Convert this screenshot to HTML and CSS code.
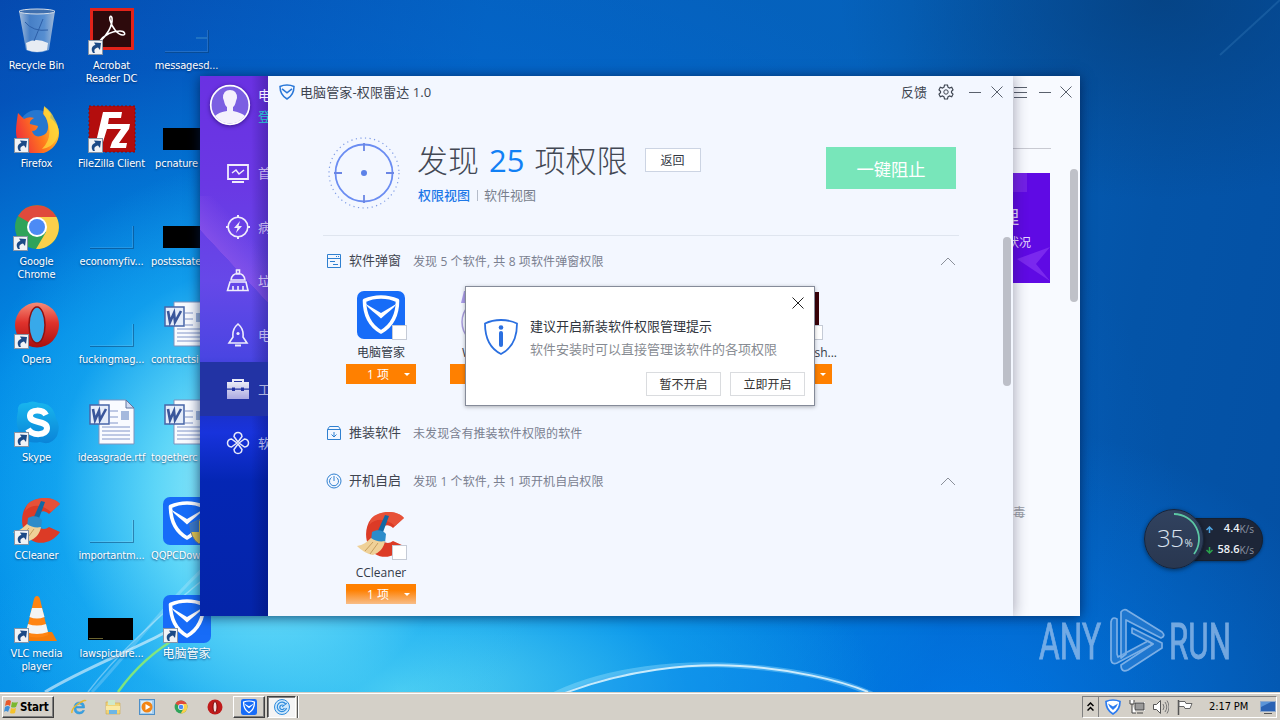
FILE: index.html
```html
<!DOCTYPE html>
<html lang="zh-CN">
<head>
<meta charset="utf-8">
<title>Desktop</title>
<link rel="stylesheet" href="styles.css">
</head>
<body>
<svg class="defs" width="0" height="0">
  <defs>
    <linearGradient id="gFox" x1="0" y1="0.6" x2="1" y2="0.2"><stop offset="0" stop-color="#f0303a"/><stop offset="0.5" stop-color="#ff7a1c"/><stop offset="1" stop-color="#ffdc3a"/></linearGradient>
    <linearGradient id="gOpera" x1="0" y1="0" x2="0" y2="1"><stop offset="0" stop-color="#f58c78"/><stop offset="0.45" stop-color="#e0322c"/><stop offset="1" stop-color="#a80f0f"/></linearGradient>
    <linearGradient id="gSkype" x1="0" y1="0" x2="0" y2="1"><stop offset="0" stop-color="#18b6ee"/><stop offset="1" stop-color="#0a84d8"/></linearGradient>
    <linearGradient id="gBin" x1="0" y1="0" x2="1" y2="0"><stop offset="0" stop-color="#b9cbe0"/><stop offset="0.3" stop-color="#4d84c8"/><stop offset="0.7" stop-color="#5f95d4"/><stop offset="1" stop-color="#b4c6dc"/></linearGradient>
    <linearGradient id="gTool" x1="0" y1="0" x2="0" y2="1"><stop offset="0" stop-color="#ffffff"/><stop offset="1" stop-color="#b9b6ea"/></linearGradient>
    <symbol id="shield" viewBox="0 0 48 48"><rect width="48" height="48" rx="7" fill="#176cf8"/><path d="M24 6c6 0 11 1 16.500 3.500C40.500 23 36 34 24 41 12 34 7.500 23 7.500 9.500 13 7 18 6 24 6z" fill="none" stroke="#fff" stroke-width="3.600" stroke-linejoin="round"/><path d="M8 12.500L24 22l16-9.500C36 18 30 22 24 27.500 18 22 12 18 8 12.500z" fill="#fff"/></symbol>
    <symbol id="shortcut" viewBox="0 0 15 15"><rect x=".5" y=".5" width="14" height="14" fill="#f1f3f6" stroke="#8794a5"/><path d="M5 13C2.500 9 4 5.500 7.500 5L6 2.500l7 .5-1 7-2-2.500C7 8 5.500 10 7 13z" fill="#1c4a86"/></symbol>
    <symbol id="cc" viewBox="0 0 48 48"><path d="M47 7C40-1 22-1 14 8 6 18 8 36 18 43c10 6 22 2 29-8l-11-5c-5 4-11 2-12-6-1-9 6-13 12-7z" fill="#dc3b26"/><path d="M47 7C40-1 22-1 14 8l-2 6C20 6 30 8 38 15z" fill="#ee6045" opacity=".6"/><path d="M28 4l4 1-7 19-5-2z" fill="#1268a4"/><path d="M15 21c5-3 11-2 14 2l-1 9-14-2z" fill="#2d8cca"/><path d="M14 27c4 3 9 4 14 3-1 7-6 12-12 14C10 43 4 39 0 35c6-1 10-4 14-8z" fill="#efd198"/><path d="M16 31l-8 9M21 32l-8 11" stroke="#c79f5e" fill="none"/></symbol>
    <symbol id="word" viewBox="0 0 48 48"><path d="M11 1h27l8 8v36H11z" fill="#f9fbff" stroke="#7f93bd"/><path d="M38 1v8h8z" fill="#cfdbf2" stroke="#61759d"/><path d="M22 12h8M22 18h8M22 24h8M14 28h28M14 32h28M14 36h28M14 40h28" stroke="#8296c9"/><rect x="33" y="12" width="8" height="9" fill="#a5b9dd"/><rect x="2" y="6" width="19" height="19" fill="#e6edfa" stroke="#4765a8" stroke-width="1.500"/><path d="M5 10l2 11 4-9 1 9 6-11" fill="none" stroke="#3a569b" stroke-width="2.600"/></symbol>
    <symbol id="thumb" viewBox="0 0 48 48"><path d="M2 45.500H45.500V23" fill="none" stroke="#0b3d6e" stroke-opacity=".5"/><path d="M2 44.500H44.500V23" fill="none" stroke="#fff" stroke-opacity=".12"/></symbol>
    <symbol id="chrome" viewBox="0 0 48 48"><circle cx="24" cy="24" r="22" fill="#2fa35a"/><path d="M24 24L5 13A22 22 0 0 1 43.500 14H24z" fill="#e04a3c"/><path d="M24 14h19.500A22 22 0 0 1 23 46l10-17z" fill="#fbd04b"/><circle cx="24" cy="24" r="10" fill="#fff"/><circle cx="24" cy="24" r="8" fill="#4c8bf5"/></symbol>
    <symbol id="opera" viewBox="0 0 48 48"><ellipse cx="24" cy="24" rx="22" ry="22.500" fill="url(#gOpera)"/><ellipse cx="24" cy="24" rx="8" ry="18" fill="#38a9ea" stroke="#8e1212" stroke-width="1.500"/></symbol>
    <symbol id="chev" viewBox="0 0 16 9"><path d="M1 8l7-7 7 7" fill="none" stroke="#8b909a"/></symbol>
    <symbol id="x" viewBox="0 0 12 12"><path d="M.5.500l11 11M11.500.500l-11 11" stroke="#5a616d" fill="none"/></symbol>
  </defs>
</svg>

<div class="desktop">
  <svg class="streaks" viewBox="0 0 1280 692">
    <path d="M45 692C95 662 150 645 200 612S330 540 380 520" fill="none" stroke="#fff" stroke-opacity=".55" stroke-width="3"/>
    <path d="M88 692C120 650 165 610 215 570" fill="none" stroke="#fff" stroke-opacity=".35" stroke-width="1.500"/>
    <path d="M92 692C140 640 175 590 230 545" fill="none" stroke="#fff" stroke-opacity=".2" stroke-width="3"/>
    <path d="M118 692C135 668 155 650 180 636" fill="none" stroke="#90ee6a" stroke-width="2.500" stroke-opacity=".85"/>
    <path d="M560 694C640 655 780 650 876 694z" fill="#1590f0" fill-opacity=".3"/>
    <path d="M555 694C610 668 680 662 740 666S840 680 872 694" fill="none" stroke="#a8e8ff" stroke-opacity=".35" stroke-width="5"/>
    <path d="M565 693C625 670 690 663 740 666S840 680 868 692" fill="none" stroke="#f0fcff" stroke-opacity=".8" stroke-width="2"/>
    <path d="M1280 0L1220 55" stroke="#5ba5dc" stroke-opacity=".2" stroke-width="2"/>
  </svg>

  <div class="icons">
    <div class="icon"><svg class="pic" viewBox="0 0 48 48"><path d="M6 4h36l-6 39q-12 5-23 0z" fill="url(#gBin)" opacity=".9"/><path d="M13 36q10-6 22 0l-1 7q-10 4-20 0z" fill="#e7ecf3"/><ellipse cx="24" cy="4.500" rx="18" ry="2.500" fill="#3f6fae" stroke="#d6dfea"/><path d="M12 15q8 10 23 8M30 12l-9 22" stroke="#2d5fa8" fill="none"/></svg><span>Recycle Bin</span></div>
    <div class="icon"><svg class="pic" viewBox="0 0 48 48"><rect x="2" y="1" width="44" height="42" fill="#e2231a"/><rect x="5" y="4" width="38" height="36" fill="#2d0a0c"/><path d="M11 35c8-6 14-17 13-24-1-3-3-2-2 2 2 8 8 15 13 15 3 0 2-4-3-4-8 0-16 4-21 11z" fill="none" stroke="#fff" stroke-width="1.600"/><use href="#shortcut" x="0" y="33" width="15" height="15"/></svg><span>Acrobat<br>Reader DC</span></div>
    <div class="icon"><svg class="pic"><use href="#thumb"/><path d="M33 31h11" stroke="#3d8cc8"/></svg><span>messagesd...</span></div>

    <div class="icon"><svg class="pic" viewBox="0 0 48 48"><circle cx="24" cy="23" r="18" fill="#2577d0"/><path d="M5 8l6 6q5-3 10-1-5 3-4 6l8 2q-1 5-6 5 2 7 9 5 8-2 7-11-1-8-5-11l1-7q4 3 7 7-1 4-1 4 9 6 9 15c0 12-10 21-22 21S3 39 3 27C3 20 5 8 5 8z" fill="url(#gFox)"/><path d="M31 1q7 5 10 12 8 13 2 22-5 8-14 9 9-9 7-21-1-8-5-13z" fill="#ffd93b" opacity=".75"/><use href="#shortcut" x="1" y="33" width="15" height="15"/></svg><span>Firefox</span></div>
    <div class="icon"><svg class="pic" viewBox="0 0 48 48"><rect x="1" y="1" width="46" height="46" fill="#b30d0d" stroke="#8a0b0b" stroke-dasharray="2 2"/><path d="M15 7h19l-1 6H21l-1 6h8l-1 5h-8l-4 13H8z" fill="#fff"/><path d="M27 19h15l-1 5-10 14h8l-1 5H22l2-6 9-13h-7z" fill="#fff"/><use href="#shortcut" x="0" y="33" width="15" height="15"/></svg><span>FileZilla Client</span></div>
    <div class="icon"><svg class="pic"><rect y="23" width="48" height="22"/></svg><span class="left">pcnature</span></div>

    <div class="icon"><svg class="pic" viewBox="0 0 48 48"><use href="#chrome"/><use href="#shortcut" x="0" y="33" width="15" height="15"/></svg><span>Google<br>Chrome</span></div>
    <div class="icon"><svg class="pic"><use href="#thumb"/></svg><span>economyfiv...</span></div>
    <div class="icon"><svg class="pic"><rect y="23" width="48" height="22"/></svg><span class="left2">postsstate</span></div>

    <div class="icon"><svg class="pic" viewBox="0 0 48 48"><use href="#opera"/><use href="#shortcut" x="1" y="33" width="15" height="15"/></svg><span>Opera</span></div>
    <div class="icon"><svg class="pic"><use href="#thumb"/></svg><span>fuckingmag...</span></div>
    <div class="icon"><svg class="pic"><use href="#word"/></svg><span class="left2">contractsi</span></div>

    <div class="icon"><svg class="pic" viewBox="0 0 48 48"><path d="M5 12Q4 3 14 4q5-3 12 0 14 0 17 15 5 8 1 18-6 10-17 6Q10 46 6 32 2 25 5 12z" fill="url(#gSkype)"/><path d="M33 16c-3-6-16-6-16 1 0 8 17 4 17 12 0 8-15 8-19 1" fill="none" stroke="#fff" stroke-width="6"/><use href="#shortcut" x="1" y="33" width="15" height="15"/></svg><span>Skype</span></div>
    <div class="icon"><svg class="pic"><use href="#word"/></svg><span>ideasgrade.rtf</span></div>
    <div class="icon"><svg class="pic"><use href="#word"/></svg><span class="left2">togetherc</span></div>

    <div class="icon"><svg class="pic" viewBox="0 0 48 48"><use href="#cc"/><use href="#shortcut" x="1" y="33" width="15" height="15"/></svg><span>CCleaner</span></div>
    <div class="icon"><svg class="pic"><use href="#thumb"/></svg><span>importantm...</span></div>
    <div class="icon"><svg class="pic"><use href="#shield"/><path d="M27 27l9-4 9 4q0 14-9 20-9-6-9-20z" fill="#e8c84a" stroke="#6a7a90"/><path d="M36 23v12h-9v-8z" fill="#3a78c8"/></svg><span class="left2">QQPCDow</span></div>

    <div class="icon"><svg class="pic" viewBox="0 0 48 48"><path d="M9 37h30l5 9H5z" fill="#f57c0a"/><path d="M24 1q2.500 0 3.500 5l8 34q-12 5-23 0l8-34q1-5 3.500-5z" fill="#ff8411"/><path d="M19 13h10l2.500 9q-7.500 3-15 0zM15 29q9 3 18 0l2 8q-11 4-22 0z" fill="#f4f4f2"/><use href="#shortcut" x="1" y="33" width="15" height="15"/></svg><span>VLC media player</span></div>
    <div class="icon"><svg class="pic"><rect y="23" width="45" height="22"/><path d="M1 43.500h14" stroke="#6b6430"/></svg><span>lawspicture...</span></div>
    <div class="icon"><svg class="pic" viewBox="0 0 48 48"><use href="#shield"/><use href="#shortcut" x="0" y="33" width="15" height="15"/></svg><span class="cjk">电脑管家</span></div>
  </div>

  <div class="backwin">
    <aside class="side">
      <div class="user">
        <svg class="avatar" viewBox="0 0 42 42"><circle cx="21" cy="21" r="19.300" fill="#7b5fe2" stroke="#fff" stroke-width="1.700"/><path d="M14 14q0-8 7-8t7 8l-1 3q-1 5-3 6v4q9 2 12 5-6 7.500-15 7.500T6 32q4-4 12-5v-4q-2-1-3-6z" fill="#f4f1fd"/></svg>
        <div class="who"><span>电</span><span class="login">登</span></div>
      </div>
      <nav>
        <div class="nav"><svg viewBox="0 0 24 24"><path d="M2 4h20v14H2z" fill="none" stroke="#fff" stroke-width="1.800"/><path d="M6 12l4-3 3 4 5-4" fill="none" stroke="#fff" stroke-width="1.500"/><path d="M6 21h12" stroke="#fff" stroke-width="2"/></svg><span>首</span></div>
        <div class="nav"><svg viewBox="0 0 24 24"><circle cx="12" cy="12" r="9.800" fill="none" stroke="#fff" stroke-width="1.600"/><path d="M12 0v3M12 21v3M0 12h3M21 12h3" stroke="#fff" stroke-width="2"/><path d="M14 6l-6 7h3.500L10 18l6-7h-3.500z" fill="#fff"/></svg><span>病</span></div>
        <div class="nav"><svg viewBox="0 0 24 24"><path d="M10.500 1h3v4h-3zM12 4.500q6 0 7 6.500H5q1-6.500 7-6.500zM4 13h16l2 8.500H1.500z" fill="none" stroke="#fff" stroke-width="1.600"/><path d="M7 21v-4M12 21v-4M17 21v-4" stroke="#fff" stroke-width="1.600"/></svg><span>垃</span></div>
        <div class="nav"><svg viewBox="0 0 24 24"><path d="M12 1q6 5 5 13l4 6H3l4-6Q6 6 12 1z" fill="none" stroke="#fff" stroke-width="1.600"/><circle cx="12" cy="10.500" r="1.600" fill="#fff"/><path d="M9 22.500h6" stroke="#fff" stroke-width="2"/></svg><span>电</span></div>
        <div class="nav on"><svg viewBox="0 0 24 24"><path d="M7 6V3h10v3" fill="none" stroke="#fff" stroke-width="2"/><path d="M1 5h22v6.500h-5v-1h-3v1H9v-1H6v1H1zM1 12.700h5v1.300h3v-1.300h6v1.300h3v-1.300h5V22H1z" fill="url(#gTool)"/></svg><span>工</span></div>
        <div class="nav"><svg viewBox="0 0 24 24"><g fill="none" stroke="#fff" stroke-width="1.500" transform="rotate(45 12 12)"><path id="petal" d="M12 11L8 5.500Q8.500 1.500 12 1.500t4 4z" transform="rotate(45 12 12)"/><use href="#petal" transform="rotate(90 12 12)"/><use href="#petal" transform="rotate(180 12 12)"/><use href="#petal" transform="rotate(270 12 12)"/></g></svg><span>软</span></div>
      </nav>
    </aside>
    <div class="backpane">
      <div class="backbar"><svg width="13" height="12"><path d="M0 1.500h13M0 6.500h13M0 11.500h13" stroke="#5a616d"/></svg><svg width="12" height="12"><path d="M0 6.500h12" stroke="#5a616d"/></svg><svg width="12" height="12"><use href="#x"/></svg></div>
      <div class="backline"></div>
      <div class="card"><svg class="cardart" viewBox="0 0 37 110"><path d="M0 0h14v19H0z" fill="#7321e6"/><path d="M4 86l33-12-14 17 14 17z" fill="#7a28ee"/></svg><b>理</b><span>状况</span></div>
      <div class="backword">毒</div>
      <div class="backscroll"></div>
    </div>
  </div>

  <div class="radarwin">
    <header class="bar">
      <svg width="16" height="16" viewBox="0 0 16 16"><path d="M8 1q4 0 7 1.500Q15 11 8 15 1 11 1 2.500 4 1 8 1z" fill="none" stroke="#2b78d8" stroke-width="1.500"/><path d="M3 4.800l5 4 5-4" fill="none" stroke="#2b78d8" stroke-width="1.600"/></svg>
      <span class="title">电脑管家-权限雷达 1.0</span>
      <span class="feedback">反馈</span>
      <svg class="gear" width="16" height="16" viewBox="0 0 16 16"><path d="M6.500 1h3l.5 2.200 1.500.8 2.200-.8L15 5.800 13.500 7.300v1.400l1.500 1.500-1.300 2.600-2.200-.8-1.500.8L9.500 15h-3L6 12.800 4.500 12l-2.200.8L1 10.200l1.500-1.500V7.300L1 5.800l1.300-2.600 2.200.8L6 3.200z" fill="none" stroke="#3f4652" stroke-width="1.200"/><circle cx="8" cy="8" r="2.200" fill="none" stroke="#3f4652"/></svg>
      <svg class="min" width="12" height="12"><path d="M0 6.500h12" stroke="#5a616d"/></svg>
      <svg width="12" height="12"><use href="#x"/></svg>
    </header>
    <div class="summary">
      <svg class="radar" viewBox="0 0 72 72"><circle cx="36" cy="36" r="35" fill="none" stroke="#7f9ce6" stroke-width="1.200" stroke-dasharray="1.200 3.400"/><circle cx="36" cy="36" r="28.500" fill="none" stroke="#6b8df2" stroke-width="1.800"/><path d="M36 6v8M36 58v8M6 36h8M58 36h8" stroke="#6b86e4" stroke-width="1.800"/><circle cx="36" cy="36" r="3" fill="#5c82e8"/></svg>
      <div class="info">
        <div class="headline"><h1>发现 <em>25</em> 项权限</h1><button class="back">返回</button></div>
        <div class="tabs"><b>权限视图</b><i></i><span>软件视图</span></div>
      </div>
      <button class="block">一键阻止</button>
    </div>
    <div class="scroll">
      <section class="s1">
        <div class="sec"><svg width="16" height="16"><path d="M1.500 1.500h13v13h-13zM1.500 5.500h13M4 8.500h5M7 11.500h5M10 3.500h1M12 3.500h1" fill="none" stroke="#2f80d0"/></svg><b>软件弹窗</b><span>发现 5 个软件, 共 8 项软件弹窗权限</span><svg class="up"><use href="#chev"/></svg></div>
        <div class="tiles">
          <div class="tile"><div class="app"><svg><use href="#shield"/></svg><i></i></div><span>电脑管家</span><div class="count">1 项<u></u></div></div>
          <div class="tile"><div class="app"><svg viewBox="0 0 48 48"><path d="M3 0h8v12H0z" fill="#a99be8"/><circle cx="24" cy="31" r="23" fill="none" stroke="#a79bdc" stroke-width="1.500"/></svg></div><span class="first">W</span><div class="count"></div></div>
          <div class="tile"></div>
          <div class="tile"></div>
          <div class="tile"><div class="app"><svg viewBox="0 0 48 48"><rect y="1" width="46" height="46" fill="#3b0208"/></svg><i></i></div><span class="last">sh...</span><div class="count"><u></u></div></div>
        </div>
      </section>
      <section class="s2"><div class="sec"><svg width="16" height="16"><path d="M1.500 4.500l2-3h9l2 3v10h-13zM1.500 4.500h13M8 7v5M5.500 9.500L8 12l2.500-2.500" fill="none" stroke="#2f80d0"/></svg><b>推装软件</b><span>未发现含有推装软件权限的软件</span></div></section>
      <section class="s3">
        <div class="sec"><svg width="16" height="16"><circle cx="8" cy="8" r="7" fill="none" stroke="#2f80d0"/><path d="M5.500 4.500a4.500 4.500 0 1 0 5 0M8 3v5" fill="none" stroke="#2f80d0"/></svg><b>开机自启</b><span>发现 1 个软件, 共 1 项开机自启权限</span><svg class="up"><use href="#chev"/></svg></div>
        <div class="tiles"><div class="tile"><div class="app"><svg><use href="#cc"/></svg><i></i></div><span>CCleaner</span><div class="count fade">1 项<u></u></div></div></div>
      </section>
    </div>
    <div class="thumbbar"></div>
  </div>

  <div class="dialog">
    <svg class="dx" viewBox="0 0 12 12"><path d="M.5.500l11 11M11.500.500l-11 11" stroke="#222"/></svg>
    <div class="dmain">
      <svg width="36" height="38" viewBox="0 0 36 38"><path d="M18 2q9 0 16 3.500Q34 28 18 36 2 28 2 5.500 9 2 18 2z" fill="none" stroke="#2a6fe0" stroke-width="1.800"/><circle cx="18" cy="9.500" r="2.300" fill="#2a6fe0"/><path d="M18 15v12" stroke="#2a6fe0" stroke-width="4" stroke-linecap="round"/></svg>
      <div class="dtext"><b>建议开启新装软件权限管理提示</b><span>软件安装时可以直接管理该软件的各项权限</span></div>
    </div>
    <div class="dbtns"><button>暂不开启</button><button>立即开启</button></div>
  </div>

  <div class="gadget">
    <div class="dial"><svg viewBox="0 0 60 60"><path d="M30 5a25 25 0 0 1 20 40" fill="none" stroke="#5cc7a4" stroke-width="1.800"/></svg><span class="num">35</span><span class="pct">%</span></div>
    <div class="rates">
      <div><svg width="7" height="7"><path d="M3.500 7V1M.5 4l3-3 3 3" fill="none" stroke="#4ea4e0" stroke-width="1.500"/></svg><b>4.4</b><span>K/s</span></div>
      <div><svg width="7" height="7"><path d="M3.500 0v6M.5 3l3 3 3-3" fill="none" stroke="#2aa44c" stroke-width="1.500"/></svg><b>58.6</b><span>K/s</span></div>
    </div>
  </div>

  <svg class="mark" viewBox="0 0 196 64">
    <g fill="#9fc4ee" stroke="#9fc4ee" stroke-width=".9" font-family="Roboto, sans-serif" font-size="50" font-weight="400"><text x="1" y="51" textLength="62" lengthAdjust="spacingAndGlyphs">ANY</text><text x="131" y="51" textLength="62" lengthAdjust="spacingAndGlyphs">RUN</text></g>
    <g fill="#77ade8" fill-opacity=".35" stroke="#a9cbf2" stroke-width="1.700" stroke-linejoin="round"><path d="M79 11q-5-3-6 3v38q1 5 6 3l36-19-5-3-30 16-1-3z"/><path d="M83 4q3-4 7-1l34 21q4 4-1 6l-35-18v34l-5 4z"/><path d="M94 20l30 15v5L90 62q-7 3-7-5l32-21-21-11z"/></g>
  </svg>
</div>

<footer class="taskbar">
  <div class="start"><svg width="17" height="16" viewBox="0 0 17 16"><path d="M3 2q3-2 5 0L7 7Q5 5 2 7z" fill="#e8582a"/><path d="M9 3q3 1 6 0l-2 5q-3 1-5 0z" fill="#7ab82e"/><path d="M2 8q3-2 5 0l-2 5q-2-2-4 0z" fill="#3f8fd8"/><path d="M8 9q2 1 5 0l-1 5q-3 1-5 0z" fill="#f5c22b"/></svg>Start</div>
  <div class="quick">
    <svg viewBox="0 0 16 16"><path d="M13.500 9H5q0 4 3.500 4 2 0 3-1.500h2Q12 15 8.500 15 3 15 3 9t5.500-6 5 6zM5 7.500h6.500Q11 5 8.500 5 6 5 5 7.500z" fill="#37a3e4" stroke="#2a8cd0" stroke-width=".5"/><path d="M1 14Q0 10 7 5t8-3" fill="none" stroke="#e9b92e" stroke-width="1.500"/></svg>
    <svg viewBox="0 0 16 16"><path d="M1 3h5l1 1h8v11H1z" fill="#f0d478" stroke="#cda94a" stroke-width=".6"/><path d="M3 1h7v5H3z" fill="#cfe8c9"/><path d="M1 7h14v4H1z" fill="#fae9a4"/><path d="M4 11h8v4H4z" fill="#6bb6e6"/></svg>
    <svg viewBox="0 0 16 16"><rect x=".5" y=".5" width="15" height="15" fill="#a5cdee" stroke="#4d8fc8"/><rect x="2" y="2" width="11" height="12" fill="#d8ebf8"/><circle cx="8" cy="8" r="5.500" fill="#f28516"/><path d="M6.500 5l5 3-5 3z" fill="#fff"/></svg>
    <svg class="sm"><use href="#chrome"/></svg>
    <svg viewBox="0 0 16 16"><circle cx="8" cy="8" r="7.500" fill="#c01a1a"/><ellipse cx="8" cy="8" rx="2" ry="5.500" fill="#f6dcdc" stroke="#7a0a0a"/></svg>
  </div>
  <div class="task"><svg><use href="#shield"/></svg></div>
  <div class="task sel"><svg viewBox="0 0 16 16"><circle cx="8" cy="8" r="7.500" fill="#cfe8fb" stroke="#2d8bdc"/><path d="M12 5.500A4.700 4.700 0 1 0 12.500 9M10 7a2.300 2.300 0 1 0 .3 2" fill="none" stroke="#2d8bdc" stroke-width="1.200"/><path d="M8 8l5-4" stroke="#2d8bdc"/></svg></div><div class="edge"></div>
  <div class="tray">
    <div class="more"><svg width="7" height="10"><path d="M.5 4l3-3 3 3M.5 8.500l3-3 3 3" fill="none" stroke="#000" stroke-width="1.500"/></svg></div>
    <svg class="t1" viewBox="0 0 16 16"><path d="M8 1q4 0 7 1.500Q15 11 8 15 1 11 1 2.500 4 1 8 1z" fill="#fff" stroke="#2b7bf0" stroke-width="1.700"/><path d="M3 4.500l5 3 5-3Q12 8 8 11 4 8 3 4.500z" fill="#2b7bf0"/></svg>
    <svg class="t2" viewBox="0 0 16 16"><path d="M5.500 3.500h10v8h-10z" fill="#bdbdbd" stroke="#fff"/><path d="M6 4h9v7H6zM8 14h6" fill="#9a9a9a" stroke="#444"/><path d="M1 1v4h4V1M3 5v9h4" fill="#fff" stroke="#444"/></svg>
    <svg class="t3" viewBox="0 0 16 16"><path d="M.5 5.500h3l4-4v13l-4-4h-3z" fill="#fff" stroke="#555"/><path d="M10 5q2 3 0 6M12 3q3.500 5 0 10M14 1.500q4 6.500 0 13" fill="none" stroke="#777"/></svg>
    <svg class="t4" viewBox="0 0 16 16"><path d="M1.500 1v15" stroke="#555" stroke-width="1.500"/><path d="M2 2.500h6l1 2h6l-2 5H8l-1-2H2z" fill="#fff" stroke="#666"/></svg>
    <span>2:17 PM</span>
    <svg class="t5" viewBox="0 0 16 16"><path d="M.5 2.500h15v10H.5z" fill="#2a62b4" stroke="#8fa9cc"/><path d="M1 8l10-5H1z" fill="#5b94d8"/><path d="M4 14.500h8" stroke="#555"/></svg>
  </div>
</footer>
</body>
</html>
```
FILE: styles.css
```css
* { box-sizing: border-box; }
body { margin: 0; width: 1280px; height: 720px; overflow: hidden; display: flex; flex-direction: column; font-family: "Open Sans", "Noto Sans CJK SC", sans-serif; font-size: 12px; }
svg { display: block; flex: none; }
button { font-family: inherit; padding: 0; }
.defs { position: absolute; }

.desktop { position: relative; height: 692px; overflow: hidden;
  background:
    radial-gradient(ellipse 300px 330px at 260px 490px, rgba(180,248,250,.95), rgba(115,228,250,.8) 35%, rgba(40,185,246,.4) 68%, rgba(0,160,240,0) 100%),
    radial-gradient(ellipse 480px 190px at 400px 690px, rgba(100,222,242,.85), rgba(30,170,240,.45) 60%, rgba(0,130,230,0)),
    radial-gradient(ellipse 900px 640px at 280px 540px, #06a6f4, rgba(0,150,240,.85) 40%, rgba(0,110,220,.35) 75%, rgba(0,90,200,0)),
    radial-gradient(ellipse 420px 300px at 960px 720px, rgba(0,126,240,.85), rgba(0,100,220,0)),
    radial-gradient(ellipse 320px 200px at 1160px 0, rgba(6,62,122,.75), rgba(6,70,140,0)),
    linear-gradient(100deg, #0644a8 0%, #0560be 35%, #0562bc 65%, #0454a8 85%, #0450a4 100%); }
.streaks { position: absolute; inset: 0; width: 1280px; height: 692px; }

.icons { position: absolute; left: -1px; top: 7px; display: grid; grid-template-columns: repeat(3, 75px); grid-auto-rows: 98px; }
.icon { display: flex; flex-direction: column; gap: 4px; color: #fff; font: 11px/13px "DejaVu Sans Condensed", sans-serif; letter-spacing: -.15px; text-align: center; text-shadow: 0 1px 2px rgba(0,30,80,.7); }
.icon .pic { width: 48px; height: 48px; margin-left: 14px; }
.icon span { padding: 0 3px; margin: 0 -2px; }
.icon .left { text-align: left; padding-left: 8px; white-space: nowrap; }
.icon .left2 { text-align: left; padding-left: 4px; white-space: nowrap; }
.icon .cjk { font-family: "Noto Sans CJK SC", sans-serif; font-size: 12px; line-height: 11px; letter-spacing: 0; }

.backwin { position: absolute; left: 200px; top: 76px; width: 880px; height: 540px; display: flex; justify-content: space-between; background: #f8faff; box-shadow: 0 1px 12px rgba(0,25,70,.75); }
.side { width: 68px; overflow: hidden; background:
  linear-gradient(90deg, rgba(0,0,60,0) 75%, rgba(0,0,60,.25)),
  linear-gradient(47deg, rgba(110,100,255,0) 56%, rgba(150,90,235,.55) 56.2%, rgba(90,90,245,0) 76%) 0 120px / 68px 170px no-repeat,
  linear-gradient(180deg, #6a31e2 0%, #6a38e4 20%, #6648e8 38%, #4a45e2 52%, #1c30c0 60%, #1833dc 66%, #0426b4 75%, #0424a8 100%); }
.user { display: flex; height: 70px; padding: 8px 0 0 9px; gap: 7px; }
.avatar { width: 42px; height: 42px; filter: drop-shadow(0 1px 2px rgba(20,0,80,.6)); }
.who { display: flex; flex-direction: column; font-size: 13px; line-height: 21px; color: #f3eeff; padding-top: 1px; }
.who .login { color: #22c8cc; }
.nav { height: 54px; display: flex; align-items: center; gap: 8px; padding-left: 26px; font-size: 13px; color: rgba(255,255,255,.65); }
.nav svg { width: 24px; height: 24px; opacity: .9; }
.nav span { margin-top: -2px; }
.nav.on { background: #2233a4; }
.backpane { position: relative; width: 67px; background: #f8faff; overflow: hidden; }
.backbar { display: flex; gap: 9px; padding: 10px 0 0 1px; }
.backbar svg:first-child { margin-right: 3px; }
.backline { height: 1px; margin-top: 50px; width: 38px; background: #c9cad2; }
.card { position: relative; width: 37px; height: 110px; margin-top: 24px; background: #5f0ae4; color: #e9dcff; display: flex; flex-direction: column; align-items: flex-end; overflow: hidden; }
.cardart { position: absolute; inset: 0; width: 37px; height: 110px; }
.card b { position: relative; font-size: 18px; font-weight: 400; line-height: 24px; margin: 32px 31px 0 0; }
.card span { position: relative; font-size: 12px; line-height: 16px; margin: 6px 19px 0 0; white-space: nowrap; }
.backword { color: #9a9ea6; font-size: 12.5px; line-height: 16px; margin-top: 222px; }
.backscroll { position: absolute; right: 2px; top: 93px; width: 8px; height: 133px; border-radius: 4px; background: #bfc1c8; }

.radarwin { position: absolute; left: 268px; top: 76px; width: 745px; height: 540px; background: #f3f7ff; box-shadow: 0 0 14px rgba(20,20,50,.4); clip-path: inset(0 -16px 0 0); overflow: visible; }
.bar { height: 32px; display: flex; align-items: center; padding: 0 10px 0 11px; color: #3d4450; font-size: 13px; }
.title { margin: -2px 0 0 5px; letter-spacing: .12px; }
.feedback { margin: -2px 0 0 auto; }
.gear { margin-left: 11px; }
.min { margin: 0 10px 0 15px; }
.summary { display: flex; margin: 0 54px 0 55px; height: 128px; padding-top: 29px; border-bottom: 1px solid #dfe5ef; }
.radar { width: 72px; height: 72px; margin-left: 5px; }
.info { margin-left: 17px; }
.headline { display: flex; height: 46px; align-items: center; gap: 17px; }
h1 { margin: 0; font-size: 31px; line-height: 46px; font-weight: 300; color: #424854; white-space: nowrap; word-spacing: 2px; }
h1 em { font-style: normal; font-weight: 400; color: #1180f5; }
.back { width: 56px; height: 24px; border: 1px solid #ccd4e3; background: #fff; color: #333942; font-size: 12px; }
.tabs { display: flex; align-items: center; height: 22px; font-size: 13px; color: #777e8c; padding-left: 1px; }
.tabs b { color: #1d78e8; font-weight: 500; }
.tabs i { width: 1px; height: 11px; margin: 2px 6px 0 7px; background: #b5bcc9; }
.block { margin: 10px 3px 0 auto; width: 130px; height: 42px; border: 0; background: #78e6ba; color: #fff; font-size: 17.3px; }
.scroll { height: 380px; padding: 0 57px 0 58px; overflow: hidden; }
.sec { display: flex; align-items: center; height: 20px; color: #3f4550; font-size: 13px; }
.sec b { font-weight: 400; margin: -3px 12px 0 7px; }
.sec span { font-size: 12px; color: #7a8090; letter-spacing: .1px; }
.up { width: 16px; height: 9px; margin-left: auto; }
.s1 { padding-top: 15px; height: 187px; }
.s2 { height: 48px; }
.tiles { display: flex; gap: 34px; padding: 20px 0 0 20px; }
.tile { width: 70px; display: flex; flex-direction: column; align-items: center; font-size: 12px; color: #343b48; }
.app { position: relative; width: 48px; height: 48px; }
.app svg { width: 48px; height: 48px; }
.app i { position: absolute; right: -2px; bottom: -1px; width: 15px; height: 15px; border: 1px solid #c5cbd6; background: #fff; }
.tile > span { height: 25px; line-height: 27px; white-space: nowrap; }
.tile .first { align-self: flex-start; padding-left: 12px; }
.tile .last { align-self: flex-end; margin-right: -5px; }
.count { position: relative; width: 70px; height: 20px; background: #ff8000; color: #fff; line-height: 21px; text-align: center; padding-right: 6px; }
.count u { position: absolute; right: 6px; top: 9px; border: 3px solid transparent; border-top-color: #fff; }
.count.fade { background: linear-gradient(#ff8000 30%, #f8bd88); }
.s3 .tiles { padding-top: 20px; }
.thumbbar { position: absolute; right: 2px; top: 161px; width: 8px; height: 149px; border-radius: 4px; background: #bcbfc8; }

.dialog { position: absolute; left: 465px; top: 286px; width: 350px; height: 120px; background: #fff; border: 1px solid #858b99; box-shadow: 0 1px 4px rgba(0,0,0,.3); }
.dx { position: absolute; right: 10px; top: 10px; width: 12px; height: 12px; }
.dmain { display: flex; gap: 11px; padding: 28px 0 0 17px; height: 85px; }
.dmain svg { margin-top: 3px; }
.dtext { display: flex; flex-direction: column; font-size: 13px; line-height: 23px; color: #30353d; }
.dtext b { font-weight: 400; }
.dtext span { color: #878b92; }
.dbtns { display: flex; justify-content: flex-end; gap: 9px; padding-right: 9px; }
.dbtns button { width: 75px; height: 24px; background: #fff; border: 1px solid #dadcdf; color: #333; font-size: 12px; padding-bottom: 1px; }

.gadget { position: absolute; left: 1144px; top: 509px; width: 119px; height: 60px; display: flex; align-items: center; }
.dial { position: relative; z-index: 1; width: 60px; height: 60px; border-radius: 50%; background: linear-gradient(#31425f, #293750); border: 1px solid #17243a; box-shadow: 0 1px 4px rgba(0,0,0,.5); color: #dbe4f0; display: flex; align-items: baseline; padding: 12px 0 0 12px; }
.dial svg { position: absolute; left: -1px; top: -1px; width: 60px; height: 60px; }
.num { font: 300 24px/32px "Open Sans", sans-serif; letter-spacing: -.5px; }
.pct { font-size: 10px; margin-left: 1px; }
.rates { margin-left: -24px; width: 83px; height: 43px; border-radius: 0 22px 22px 0; background: #1d2638; border: 1px solid #16202f; padding-right: 8px; color: #eef2f7; box-shadow: 0 1px 3px rgba(0,0,0,.4); }
.rates div { display: flex; align-items: center; height: 21px; padding-left: 25px; font-size: 11px; }
.rates b { font-weight: 600; margin: -3px 0 0 auto; }
.rates span { color: #8b94a3; font-size: 10px; }
.mark { position: absolute; left: 1038px; top: 608px; width: 196px; height: 64px; opacity: .72; }

.taskbar { height: 28px; display: flex; align-items: center; background: #d4d0c8; border-top: 1px solid #d4d0c8; box-shadow: inset 0 1px #fff; padding: 2px 3px 2px 2px; }
.start { width: 52px; height: 22px; display: flex; align-items: center; font: bold 11.5px "DejaVu Sans Condensed", sans-serif; letter-spacing: -.2px; border: 1px solid; border-color: #fff #404040 #404040 #fff; box-shadow: inset -1px -1px #808080; }
.quick { display: flex; gap: 18px; margin: 0 12px 0 17px; width: 150px; }
.quick svg { width: 16px; height: 16px; }
.quick .sm { padding: 1px; }
.task { width: 32px; height: 22px; display: flex; align-items: center; justify-content: center; border: 1px solid; border-color: #fff #404040 #404040 #fff; box-shadow: inset -1px -1px #808080; }
.task svg { width: 16px; height: 16px; }
.task.sel { margin-left: 2px; width: 29px; background: #f4f4f4; border-color: #404040 #fff #fff #404040; box-shadow: inset 1px 1px #808080; }
.edge { width: 2px; height: 22px; margin-left: 1px; background: #fff; border-left: 1px solid #555; }
.tray { margin-left: auto; width: 195px; height: 22px; display: flex; align-items: center; border: 1px solid; border-color: #808080 #fff #fff #808080; }
.tray svg { width: 16px; height: 16px; }
.more { width: 16px; height: 20px; border-right: 1px solid #808080; display: flex; align-items: center; justify-content: center; }
.tray .more svg { width: 7px; height: 10px; }
.t1 { margin-left: 6px; }
.t2, .t3, .t4 { margin-left: 8px; }
.tray span { font: 11px "DejaVu Sans Condensed", sans-serif; margin-left: 16px; width: 41px; letter-spacing: -.1px; white-space: nowrap; }
.t5 { margin-left: 10px; }
```
